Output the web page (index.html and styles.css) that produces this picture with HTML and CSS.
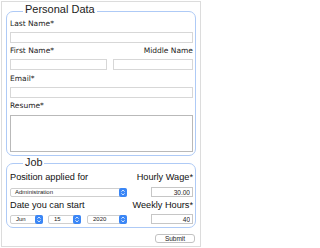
FILE: index.html
```html
<!DOCTYPE html>
<html lang="en">
<head>
<meta charset="utf-8">
<title>Application</title>
<link rel="stylesheet" href="styles.css">
</head>
<body>
<form class="app">
  <section class="group personal">
    <h2 class="legend">Personal Data</h2>
    <div class="field">
      <label class="lbl">Last Name*</label>
      <input class="txt" type="text">
    </div>
    <div class="pair">
      <div class="field">
        <label class="lbl">First Name*</label>
        <input class="txt" type="text">
      </div>
      <div class="field">
        <label class="lbl right">Middle Name</label>
        <input class="txt" type="text">
      </div>
    </div>
    <div class="field">
      <label class="lbl">Email*</label>
      <input class="txt" type="text">
    </div>
    <div class="field">
      <label class="lbl">Resume*</label>
      <textarea class="area"></textarea>
    </div>
  </section>

  <section class="group job">
    <h2 class="legend">Job</h2>
    <div class="jrow">
      <label>Position applied for</label>
      <label>Hourly Wage*</label>
    </div>
    <div class="crow first">
      <div class="select admin"><span class="val">Administration</span><span class="arrow"><svg viewBox="0 0 8 9" width="8" height="9"><polyline points="2.5,3.6 4,2.1 5.5,3.6"/><polyline points="2.5,5.4 4,6.9 5.5,5.4"/></svg></span></div>
      <input class="num" type="text" value="30.00">
    </div>
    <div class="jrow second">
      <label>Date you can start</label>
      <label>Weekly Hours*</label>
    </div>
    <div class="crow">
      <div class="dates">
        <div class="select month"><span class="val">Jun</span><span class="arrow"><svg viewBox="0 0 8 9" width="8" height="9"><polyline points="2.5,3.6 4,2.1 5.5,3.6"/><polyline points="2.5,5.4 4,6.9 5.5,5.4"/></svg></span></div>
        <div class="select day"><span class="val">15</span><span class="arrow"><svg viewBox="0 0 8 9" width="8" height="9"><polyline points="2.5,3.6 4,2.1 5.5,3.6"/><polyline points="2.5,5.4 4,6.9 5.5,5.4"/></svg></span></div>
        <div class="select year"><span class="val">2020</span><span class="arrow"><svg viewBox="0 0 8 9" width="8" height="9"><polyline points="2.5,3.6 4,2.1 5.5,3.6"/><polyline points="2.5,5.4 4,6.9 5.5,5.4"/></svg></span></div>
      </div>
      <input class="num" type="text" value="40">
    </div>
  </section>

  <div class="actions">
    <button class="submit" type="button">Submit</button>
  </div>
</form>
</body>
</html>
```

FILE: styles.css
```css
* {
  box-sizing: border-box;
  margin: 0;
  padding: 0;
}

body {
  margin: 0;
  background: #fff;
  font-family: "Liberation Sans", Arial, sans-serif;
  color: #111;
}

.app {
  margin: 1px;
  width: 200px;
  height: 246px;
  border: 1px solid #dcdcdc;
  padding: 9px 4px 0 4px;
  display: flex;
  flex-direction: column;
}

.group {
  position: relative;
  border: 1px solid #aecaf6;
  border-radius: 7px;
  padding: 7px 2px 0 3px;
  display: flex;
  flex-direction: column;
}

.personal {
  height: 145px;
  gap: 3.3px;
}

.job {
  height: 65px;
  margin-top: 7px;
  padding-top: 8px;
}

.legend {
  position: absolute;
  left: 16px;
  top: -8.5px;
  background: #fff;
  padding: 0 2px;
  font-family: "Liberation Sans", Arial, sans-serif;
  font-size: 11px;
  line-height: 11px;
  font-weight: normal;
  color: #222;
}

.job .legend {
  top: -7px;
  font-size: 10.8px;
}

.field {
  display: flex;
  flex-direction: column;
}

.lbl {
  display: block;
  font-family: "DejaVu Sans", Verdana, sans-serif;
  font-size: 7.5px;
  line-height: 10px;
  color: #222;
  white-space: nowrap;
}

.lbl.right {
  text-align: right;
}

.txt {
  display: block;
  width: 100%;
  height: 11px;
  margin-top: 3px;
  border: 1px solid #d7d7d7;
  border-radius: 0;
  background: #fff;
  outline: none;
}

.pair {
  display: grid;
  grid-template-columns: 97px 1fr;
  column-gap: 6px;
}

.area {
  display: block;
  width: 100%;
  height: 37px;
  margin-top: 4px;
  border: 1px solid #b9b9b9;
  border-radius: 0;
  resize: none;
  outline: none;
}

.jrow {
  display: flex;
  justify-content: space-between;
  font-size: 9.2px;
  line-height: 11px;
  color: #111;
  white-space: nowrap;
}

.jrow.second {
  margin-top: 3px;
}

.crow {
  display: flex;
  justify-content: space-between;
  align-items: center;
  height: 10px;
  margin-top: 3px;
}

.crow.first {
  margin-top: 4px;
}

.select {
  display: flex;
  align-items: center;
  height: 9px;
  border: 1px solid #cfcfcf;
  border-radius: 2px;
  background: #fff;
  font-size: 6px;
  color: #222;
  padding-left: 4px;
}

.select .val {
  line-height: 7px;
}

.arrow {
  margin: -1px -1px -1px auto;
  width: 8px;
  height: 9px;
  border-radius: 2px;
  background: #3a86f6;
  display: flex;
}

.arrow svg {
  fill: none;
  stroke: #fff;
  stroke-width: 0.9;
}

.admin {
  width: 117px;
}

.dates {
  display: flex;
  align-items: center;
}

.month {
  width: 33px;
  padding-left: 5px;
}

.day {
  width: 33px;
  margin-left: 5px;
  padding-left: 5px;
}

.year {
  width: 40px;
  margin-left: 6px;
  padding-left: 5px;
}

.num {
  display: block;
  width: 42px;
  height: 10px;
  border: 1px solid #c6c6c6;
  border-radius: 0;
  background: #fff;
  font-family: "Liberation Sans", Arial, sans-serif;
  font-size: 6.5px;
  color: #222;
  text-align: right;
  padding: 0 2px 0 0;
  outline: none;
}

.actions {
  display: flex;
  justify-content: flex-end;
  margin-top: 6px;
  padding-right: 1px;
}

.submit {
  width: 40px;
  height: 9px;
  border: 1px solid #c2c2c2;
  border-radius: 3px;
  background: #fff;
  font-family: "Liberation Sans", Arial, sans-serif;
  font-size: 6.5px;
  line-height: 7px;
  color: #222;
  padding: 0;
}
```
